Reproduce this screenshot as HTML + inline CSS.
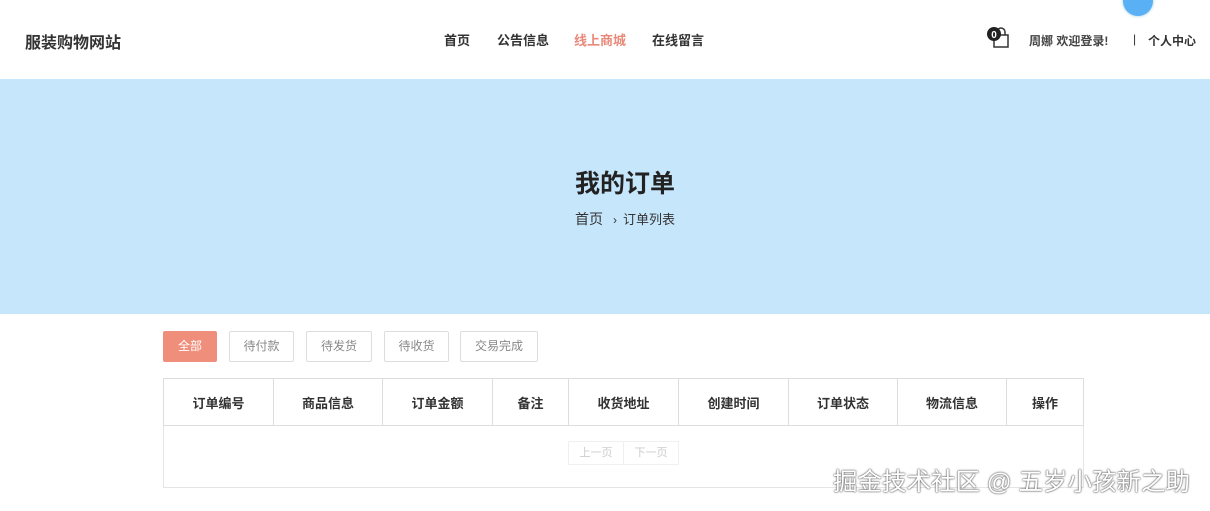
<!DOCTYPE html>
<html><head><meta charset="utf-8"><style>
*{margin:0;padding:0;box-sizing:border-box}
body{width:1210px;height:511px;overflow:hidden;background:#fff;font-family:"Liberation Sans","Noto Sans CJK SC",sans-serif;position:relative;color:#333}
.logo{position:absolute;left:25px;top:29px;font-size:16px;font-weight:bold;color:#333}
.nav{position:absolute;top:30px;font-size:13px;font-weight:bold;color:#333}
.hero{position:absolute;left:0;top:79px;width:1210px;height:235px;background:#c6e6fc}
.title{position:absolute;left:20px;width:1210px;top:164px;text-align:center;font-size:25px;font-weight:bold;color:#222}
.crumb{position:absolute;left:20px;width:1210px;top:209px;text-align:center;font-size:14px;color:#333}
.tab{position:absolute;top:331px;height:31px;border:1px solid #ddd;border-radius:2px;font-size:12px;color:#888;text-align:center;line-height:29px;background:#fff}
table{position:absolute;left:163px;top:378px;width:921px;border-collapse:collapse}
th{height:47px;border:1px solid #ddd;font-size:13px;font-weight:bold;color:#333}
td{height:62px;border:1px solid #e5e5e5}
.pg{position:absolute;top:441px;height:24px;border:1px solid #f0f0f0;font-size:11px;color:#ccc;text-align:center;line-height:22px}
.wm{position:absolute;left:833px;top:463px;font-size:24.5px;color:#fff;text-shadow:0 0 2px #555,0 0 1px #333;white-space:nowrap}
</style></head><body>
<div class="logo">服装购物网站</div>
<div class="nav" style="left:444px">首页</div>
<div class="nav" style="left:497px">公告信息</div>
<div class="nav" style="left:574px;color:#e8897a">线上商城</div>
<div class="nav" style="left:652px">在线留言</div>
<div style="position:absolute;left:1123px;top:-14px;width:30px;height:30px;border-radius:50%;background:#5ab0f5;box-shadow:0 0 3px #9cd"></div>
<svg style="position:absolute;left:986px;top:26px" width="28" height="24" viewBox="0 0 28 24"><rect x="8" y="9" width="14" height="12" fill="#fff" stroke="#333" stroke-width="1.5"/><path d="M11 9 V6 a4 4 0 0 1 8 0 V9" fill="none" stroke="#333" stroke-width="1.5"/><circle cx="8" cy="8" r="7" fill="#222"/><text x="8" y="12" font-size="10" fill="#fff" text-anchor="middle" font-weight="bold" font-family="Liberation Sans">0</text></svg>
<div class="nav" style="left:1029px;top:32px;font-size:12px;color:#444">周娜 欢迎登录!</div>
<div class="nav" style="left:1133px;top:32px;font-size:12px;font-weight:normal">|</div>
<div class="nav" style="left:1148px;top:32px;font-size:12px">个人中心</div>
<div class="hero"></div>
<div class="title">我的订单</div>
<div class="crumb">首页 <span style="font-size:12px;margin:0 6px">›</span><span style="font-size:13px">订单列表</span></div>
<div class="tab" style="left:163px;width:54px;background:#ef8f7b;border-color:#ef8f7b;color:#fff">全部</div>
<div class="tab" style="left:229px;width:65px">待付款</div>
<div class="tab" style="left:306px;width:66px">待发货</div>
<div class="tab" style="left:384px;width:65px">待收货</div>
<div class="tab" style="left:460px;width:78px">交易完成</div>
<table><tr>
<th style="width:110px">订单编号</th><th style="width:109px">商品信息</th><th style="width:110px">订单金额</th><th style="width:76px">备注</th><th style="width:110px">收货地址</th><th style="width:110px">创建时间</th><th style="width:109px">订单状态</th><th style="width:109px">物流信息</th><th>操作</th>
</tr><tr><td colspan="9"></td></tr></table>
<div class="pg" style="left:568px;width:56px">上一页</div>
<div class="pg" style="left:623px;width:56px">下一页</div>
<div class="wm">掘金技术社区 @ 五岁小孩新之助</div>
</body></html>
